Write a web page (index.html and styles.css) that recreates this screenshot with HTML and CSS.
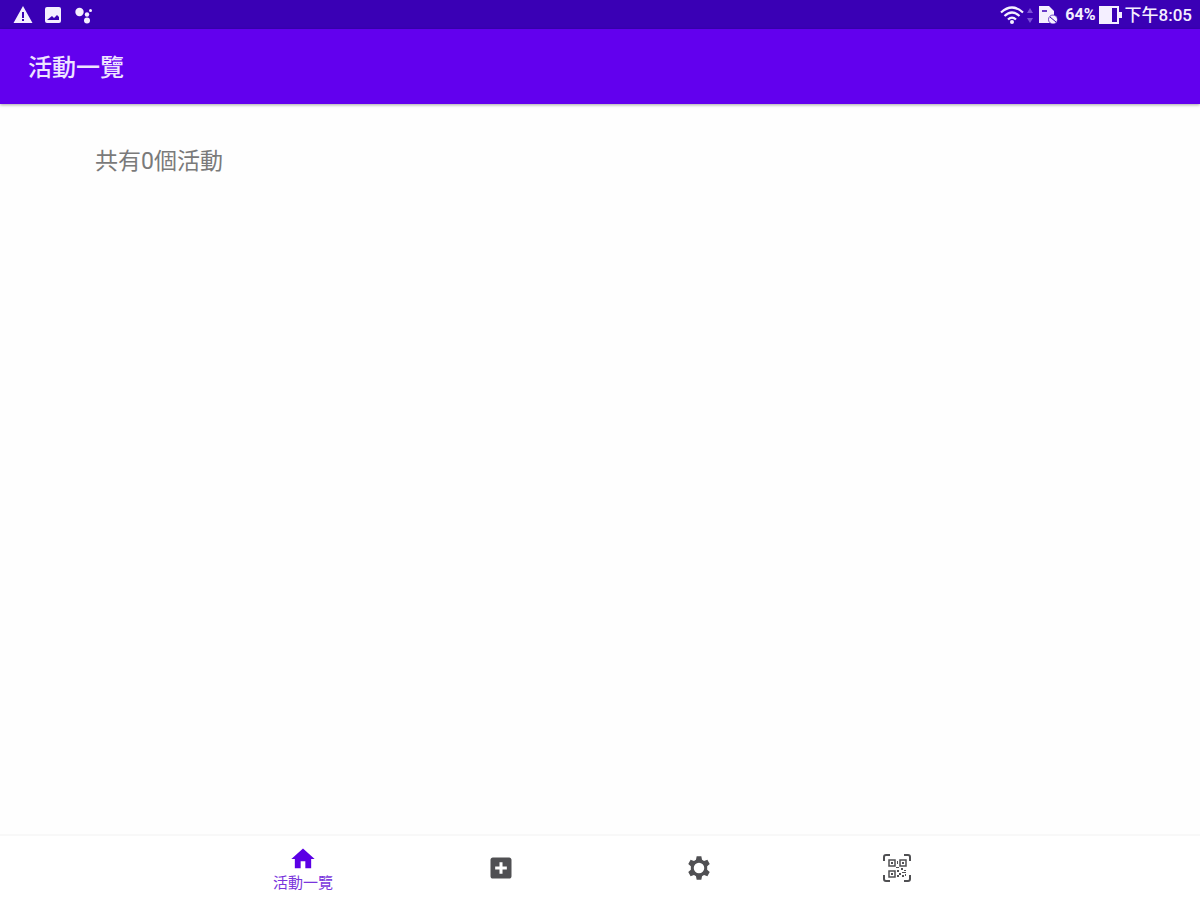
FILE: index.html
```html
<!DOCTYPE html>
<html lang="zh-Hant">
<head>
<meta charset="utf-8">
<meta name="viewport" content="width=device-width, initial-scale=1">
<title>活動一覽</title>
<link rel="stylesheet" href="styles.css">
</head>
<body>
<div class="status-bar">
  <div class="notices">
    <svg width="20" height="20" viewBox="0 0 20 20" aria-hidden="true"><path fill="currentColor" fill-rule="evenodd" d="M10 1 19.500 18H.5ZM9 7v6h2V7ZM9 14v2h2v-2Z"/></svg>
    <svg width="20" height="20" viewBox="0 0 20 20" aria-hidden="true"><path fill="currentColor" fill-rule="evenodd" d="M4 2h12a2 2 0 0 1 2 2v12a2 2 0 0 1-2 2H4a2 2 0 0 1-2-2V4a2 2 0 0 1 2-2ZM4 15h12v-3l-2-2-3 3-2-2Z"/></svg>
    <svg width="20" height="20" viewBox="0 0 20 20" aria-hidden="true"><g fill="currentColor"><circle cx="6.500" cy="7" r="4.200"/><circle cx="14" cy="9.500" r="2.200"/><circle cx="14" cy="15.500" r="3"/><circle cx="17.500" cy="5.500" r="1.500"/></g></svg>
  </div>
  <div class="system">
    <svg width="24" height="20" viewBox="0 0 24 20" aria-hidden="true"><g fill="none" stroke="currentColor" stroke-width="2.200"><path d="M1 7.500Q12-2.500 23 7.500"/><path d="M4.500 11Q12 4 19.500 11"/><path d="M8 14.500Q12 10.500 16 14.500"/></g><circle cx="12" cy="17" r="2" fill="currentColor"/></svg>
    <svg class="traffic" width="8" height="20" viewBox="0 0 8 20" aria-hidden="true"><path fill="currentColor" d="M4 3 7 8H1ZM4 18 1 13h6Z"/></svg>
    <svg class="card" width="20" height="20" viewBox="0 0 20 20" aria-hidden="true"><path fill="currentColor" d="M1 1h10l5 5v12H1Z"/><path stroke="#3a00b5" stroke-width="1.500" d="M4 6h5"/><circle cx="15" cy="14.500" r="4.500" fill="currentColor" stroke="#3a00b5" stroke-width=".7"/><path stroke="#3a00b5" d="m12 12 6 5"/></svg>
    <span class="percent">64%</span>
    <svg width="25" height="20" viewBox="0 0 25 20" aria-hidden="true"><path fill="none" stroke="currentColor" stroke-width="2" d="M2 2h18v16H2Z"/><path fill="currentColor" d="M2 2h12v16H2ZM21 7h3v6h-3Z"/></svg>
    <span class="clock">下午8:05</span>
  </div>
</div>
<header class="app-bar"><h1>活動一覽</h1></header>
<main><p>共有0個活動</p></main>
<nav class="bottom-nav">
  <a class="active" href="#events"><svg width="28" height="28" viewBox="0 0 24 24" aria-hidden="true"><path fill="currentColor" d="M10 20v-6h4v6h5v-8h3L12 3 2 12h3v8z"/></svg><span>活動一覽</span></a>
  <a href="#add" aria-label="新增"><svg width="28" height="28" viewBox="0 0 24 24" aria-hidden="true"><path fill="currentColor" d="M19 3H5c-1.110 0-2 .9-2 2v14c0 1.100.890 2 2 2h14c1.100 0 2-.9 2-2V5c0-1.100-.9-2-2-2zm-2 10.300h-3.700V17h-2.600v-3.700H7v-2.600h3.700V7h2.600v3.700H17z"/></svg></a>
  <a href="#settings" aria-label="設定"><svg width="28" height="28" viewBox="0 0 24 24" aria-hidden="true"><path fill="currentColor" fill-rule="evenodd" d="M10 2h4l.6 3 1.700 1 2.900-1 2 3.500L19 10.500v3l2.200 2-2 3.500-2.900-1-1.700 1-.6 3h-4l-.6-3-1.700-1-2.900 1-2-3.500L5 13.500v-3l-2.200-2 2-3.500 2.900 1 1.700-1ZM12 7.500a4.500 4.500 0 1 0 0 9 4.500 4.500 0 0 0 0-9Z"/></svg></a>
  <a href="#scan" aria-label="掃描"><svg width="30" height="30" viewBox="0 0 30 30" aria-hidden="true"><g fill="none" stroke="currentColor"><path stroke-width="2" d="M2 8V4q0-2 2-2h4M22 2h4q2 0 2 2v4M28 22v4q0 2-2 2h-4M8 28H4q-2 0-2-2v-4"/><path stroke-width="1.500" d="M7 7h6v6H7ZM18 7h6v6h-6ZM7 18h6v6H7Z"/></g><path fill="currentColor" d="M9 9h2v2H9ZM20 9h2v2h-2ZM9 20h2v2H9ZM15 8h1v3h-1ZM14 14h3v1h-3ZM19 15h2v2h-2ZM22 17h2v1h-2ZM15 17h2v2h-2ZM17 20h2v2h-2ZM15 22h2v2h-2ZM20 19h4v1h-4ZM20 22h2v2h-2ZM23 21h1v2h-1Z"/></svg></a>
</nav>
</body>
</html>
```
FILE: styles.css
```css
* {
  box-sizing: border-box;
}

body {
  margin: 0;
  min-height: 100vh;
  display: flex;
  flex-direction: column;
  background: #fefefe;
  font-family: Roboto, "Noto Sans CJK TC", sans-serif;
}

svg {
  display: block;
  flex: none;
}

.status-bar {
  display: flex;
  justify-content: space-between;
  align-items: center;
  height: 29px;
  padding: 0 8px 0 13px;
  background: #3a00b5;
  color: #f4efff;
}

.notices {
  display: flex;
  gap: 10px;
}

.system {
  display: flex;
  align-items: center;
  gap: 2px;
  font-size: 17px;
  line-height: 24px;
  font-weight: 500;
  white-space: nowrap;
}

.traffic {
  color: #7c50d8;
}

.card {
  margin: 0 5px 0 2px;
}

.percent {
  font-size: 16px;
  font-weight: 700;
}

.app-bar {
  display: flex;
  align-items: center;
  height: 75px;
  padding: 2px 28px 0;
  background: #6200ee;
  color: #eee5ff;
  box-shadow: 0 1px 3px rgba(0, 0, 0, 0.35);
}

h1 {
  margin: 0;
  font-size: 24px;
  line-height: 32px;
  font-weight: 500;
}

main {
  flex: 1;
  padding: 42px 95px;
}

p {
  margin: 0;
  color: #7a7a7a;
  font-size: 23px;
  line-height: 32px;
}

.bottom-nav {
  display: flex;
  justify-content: center;
  height: 66px;
  border-top: 2px solid #f8f8f8;
  background: #fff;
}

.bottom-nav a {
  display: flex;
  flex: 0 1 198px;
  flex-direction: column;
  align-items: center;
  justify-content: center;
  color: #505053;
  text-decoration: none;
}

.bottom-nav .active {
  padding-top: 2px;
  color: #5b00e5;
}

.bottom-nav span {
  color: #7a35dc;
  font-size: 15px;
  line-height: 20px;
}
```
